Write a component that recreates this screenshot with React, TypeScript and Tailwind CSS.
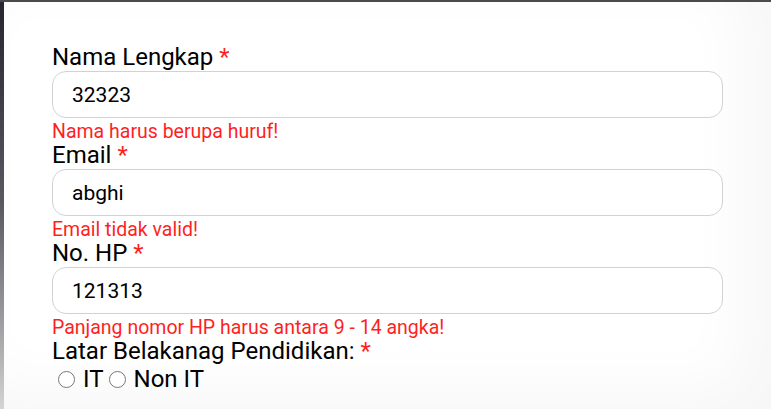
import { useState } from 'react';

type Field = {
  label: string;
  value: string;
  error: string;
};

const fields: Field[] = [
  { label: 'Nama Lengkap', value: '32323', error: 'Nama harus berupa huruf!' },
  { label: 'Email', value: 'abghi', error: 'Email tidak valid!' },
  { label: 'No. HP', value: '121313', error: 'Panjang nomor HP harus antara 9 - 14 angka!' },
];

export default function App() {
  const [values, setValues] = useState(fields.map((f) => f.value));
  const [latar, setLatar] = useState('');

  return (
    <div className="w-[771px] h-[409px] overflow-hidden flex flex-col bg-[#f6f6f6] font-['Roboto',sans-serif] text-black">
      {/* top bar */}
      <div className="h-[2px] bg-[#4a4a4a] shrink-0" />
      <div className="flex flex-1 min-h-0">
        {/* left edge */}
        <div className="w-[4px] shrink-0 bg-gradient-to-b from-[#262633] via-[#5a5a62] to-[#d4d4d4]" />
        <div className="flex-1 bg-white shadow-[inset_-30px_-20px_60px_rgba(0,0,0,0.035)] pl-[48px] pr-[48px] pt-[41px]">
          <form className="flex flex-col">
            {fields.map((f, i) => (
              <div key={f.label} className="flex flex-col">
                <label className="text-[24px] leading-[28px]">
                  {f.label} <span className="text-[#ff1f1f]">*</span>
                </label>
                <input
                  type="text"
                  value={values[i]}
                  onChange={(e) =>
                    setValues((prev) => prev.map((v, j) => (j === i ? e.target.value : v)))
                  }
                  className="h-[47px] w-full rounded-[14px] border border-[#cfd3d8] bg-white px-[19px] text-[21px] outline-none"
                />
                <p className="text-[19.5px] leading-[23px] text-[#ff1f1f] pt-[2px] -mb-[2px]">{f.error}</p>
              </div>
            ))}

            {/* Latar belakang */}
            <div className="flex flex-col">
              <label className="text-[24px] leading-[28px]">
                Latar Belakanag Pendidikan: <span className="text-[#ff1f1f]">*</span>
              </label>
              <div className="flex items-center text-[24px] leading-[28px]">
                <input
                  type="radio"
                  name="latar"
                  checked={latar === 'IT'}
                  onChange={() => setLatar('IT')}
                  className="ml-[6px] mr-[8px] h-[17px] w-[17px]"
                />
                <span>IT</span>
                <input
                  type="radio"
                  name="latar"
                  checked={latar === 'Non IT'}
                  onChange={() => setLatar('Non IT')}
                  className="ml-[5px] mr-[8px] h-[17px] w-[17px]"
                />
                <span>Non IT</span>
              </div>
            </div>
          </form>
        </div>
      </div>
    </div>
  );
}
